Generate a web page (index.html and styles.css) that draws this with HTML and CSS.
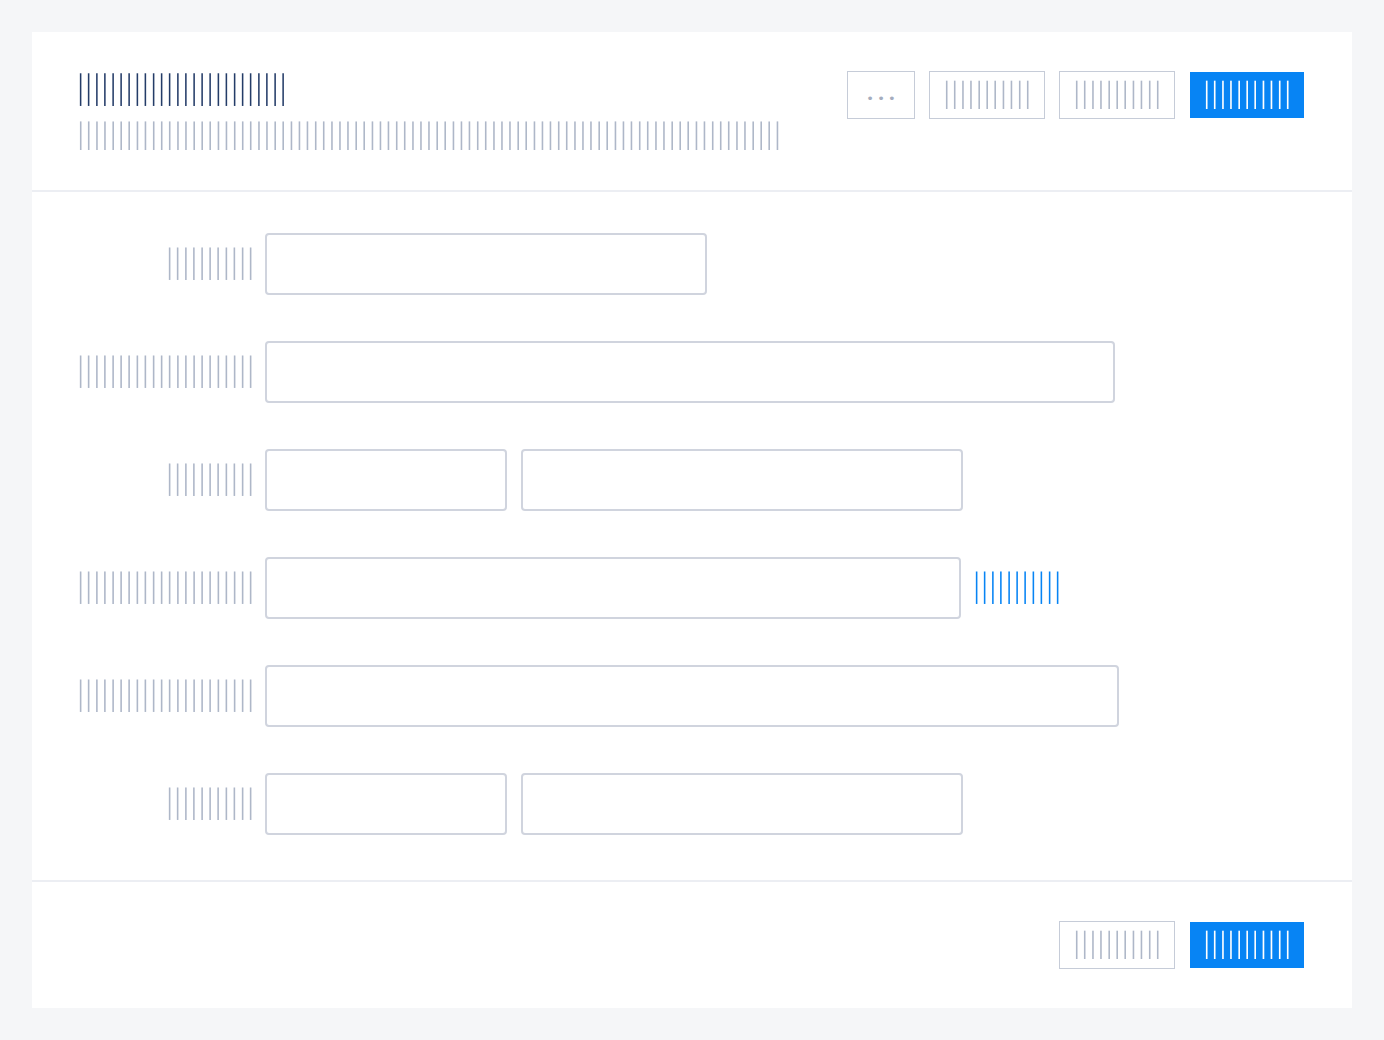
FILE: index.html
```html
<!DOCTYPE html>
<html lang="en">
<head>
<meta charset="utf-8">
<title>Form</title>
<link rel="stylesheet" href="styles.css">
</head>
<body>
<div class="card">
  <header class="head">
    <div class="head-text">
      <h1 class="bars h32 navy title">▏▏▏▏▏▏▏▏▏▏▏▏▏▏▏▏▏▏▏▏▏▏▏▏▏▏</h1>
      <p class="bars h28 grey">▏▏▏▏▏▏▏▏▏▏▏▏▏▏▏▏▏▏▏▏▏▏▏▏▏▏▏▏▏▏▏▏▏▏▏▏▏▏▏▏▏▏▏▏▏▏▏▏▏▏▏▏▏▏▏▏▏▏▏▏▏▏▏▏▏▏▏▏▏▏▏▏▏▏▏▏▏▏▏▏▏▏▏▏▏▏▏</p>
    </div>
    <div class="actions">
      <button class="btn btn-outline btn-more"><span class="dots">•••</span></button>
      <button class="btn btn-outline"><span class="bars h28 grey">▏▏▏▏▏▏▏▏▏▏▏</span></button>
      <button class="btn btn-outline"><span class="bars h28 grey">▏▏▏▏▏▏▏▏▏▏▏</span></button>
      <button class="btn btn-primary"><span class="bars h28 white">▏▏▏▏▏▏▏▏▏▏▏</span></button>
    </div>
  </header>

  <main class="form">
    <div class="row">
      <label class="label"><span class="bars h32 grey">▏▏▏▏▏▏▏▏▏▏▏</span></label>
      <input class="field w442" type="text">
    </div>
    <div class="row">
      <label class="label"><span class="bars h32 grey">▏▏▏▏▏▏▏▏▏▏▏▏▏▏▏▏▏▏▏▏▏▏</span></label>
      <input class="field w850" type="text">
    </div>
    <div class="row">
      <label class="label"><span class="bars h32 grey">▏▏▏▏▏▏▏▏▏▏▏</span></label>
      <div class="pair">
        <input class="field w242" type="text">
        <input class="field w442" type="text">
      </div>
    </div>
    <div class="row">
      <label class="label"><span class="bars h32 grey">▏▏▏▏▏▏▏▏▏▏▏▏▏▏▏▏▏▏▏▏▏▏</span></label>
      <input class="field w696" type="text">
      <a class="link" href="#"><span class="bars h32 blue">▏▏▏▏▏▏▏▏▏▏▏</span></a>
    </div>
    <div class="row">
      <label class="label"><span class="bars h32 grey">▏▏▏▏▏▏▏▏▏▏▏▏▏▏▏▏▏▏▏▏▏▏</span></label>
      <input class="field w854" type="text">
    </div>
    <div class="row">
      <label class="label"><span class="bars h32 grey">▏▏▏▏▏▏▏▏▏▏▏</span></label>
      <div class="pair">
        <input class="field w242" type="text">
        <input class="field w442" type="text">
      </div>
    </div>
  </main>

  <footer class="foot">
    <button class="btn btn-outline"><span class="bars h28 grey">▏▏▏▏▏▏▏▏▏▏▏</span></button>
    <button class="btn btn-primary"><span class="bars h28 white">▏▏▏▏▏▏▏▏▏▏▏</span></button>
  </footer>
</div>
</body>
</html>
```

FILE: styles.css
```css
* { box-sizing: border-box; }

html, body {
  margin: 0;
  padding: 0;
  background: #f5f6f8;
}

body {
  padding: 32px;
  font-family: "DejaVu Sans Mono", monospace;
}

.card {
  width: 1320px;
  height: 976px;
  background: #ffffff;
  display: flex;
  flex-direction: column;
}

/* bar "text" */
.bars {
  display: block;
  margin: 0;
  font-family: "DejaVu Sans Mono", monospace;
  font-weight: 400;
  font-size: 20px;
  letter-spacing: -3.94px;
  line-height: 23px;
  height: 23px;
  white-space: nowrap;
  transform-origin: center center;
  will-change: transform;
  -webkit-font-smoothing: antialiased;
}
.h32 { transform: scaleY(1.375); margin: 4.5px 0; }
.h28 { transform: scaleY(1.203); margin: 2.5px 0; }

.navy { color: #243c68; }
.grey { color: #aeb7c8; }
.white { color: #ffffff; }
.blue { color: #0784f4; }

/* header */
.head {
  display: flex;
  justify-content: space-between;
  align-items: flex-start;
  padding: 40px 48px;
  border-bottom: 2px solid #eceef3;
}

.head-text {
  display: flex;
  flex-direction: column;
  gap: 16px;
}

.title { margin: 6.5px 0 4.5px; }

.actions {
  display: flex;
  gap: 16px;
  align-items: flex-start;
}

.btn {
  display: flex;
  align-items: center;
  height: 46px;
  width: 114px;
  padding: 0 0 0 16px;
  border: 0;
  font: inherit;
  background: #ffffff;
  cursor: pointer;
}

.btn-outline {
  width: 116px;
  height: 48px;
  margin: -1px;
  border: 1px solid #c6ccd8;
}

.btn-primary {
  background: #0784f4;
}

.btn-more {
  width: 68px;
  padding: 6px 0 0 3.3px;
  justify-content: center;
}

.dots {
  font-family: "DejaVu Sans", sans-serif;
  font-size: 13px;
  line-height: 13px;
  letter-spacing: 3.3px;
  color: #a5adbe;
}

/* form */
.form {
  flex: 1;
  display: flex;
  flex-direction: column;
  gap: 46px;
  padding: 41px 48px 45px;
}

.row {
  display: flex;
  align-items: center;
  gap: 7px;
}

.label {
  width: 178px;
  display: flex;
  justify-content: flex-end;
}

.pair {
  display: flex;
  gap: 14px;
}

.field {
  height: 62px;
  margin: 0;
  padding: 0 16px;
  border: 2px solid #d0d4de;
  border-radius: 4px;
  background: #ffffff;
  outline: none;
  font: inherit;
}

.w242 { width: 242px; }
.w442 { width: 442px; }
.w696 { width: 696px; }
.w850 { width: 850px; }
.w854 { width: 854px; }

.link {
  margin-left: 8px;
  text-decoration: none;
}

/* footer */
.foot {
  display: flex;
  justify-content: flex-end;
  align-items: center;
  gap: 16px;
  padding: 40px 48px;
  border-top: 2px solid #eceef3;
}
```
